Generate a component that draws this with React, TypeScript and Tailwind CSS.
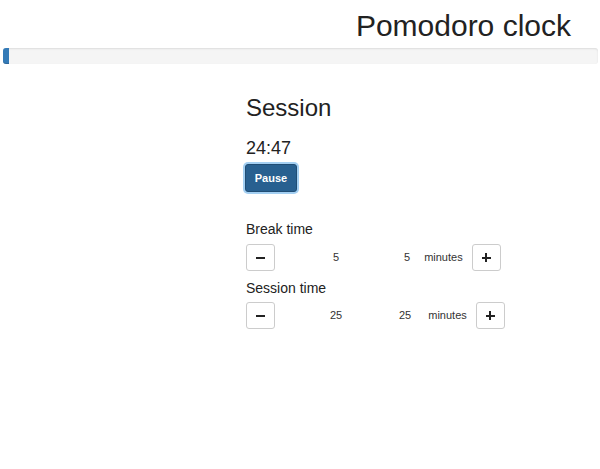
import { useState } from "react"

const font = { fontFamily: '"Liberation Sans", Arial, sans-serif' }

function StepButton({ sign }: { sign: "-" | "+" }) {
  return (
    <button className="w-[29px] h-[27px] flex items-center justify-center bg-white border border-[#ccc] rounded-[3px] shrink-0">
      {sign === "-" ? (
        <span className="block w-[9px] h-[2px] bg-[#222]" />
      ) : (
        <span className="relative block w-[9px] h-[9px]">
          <span className="absolute left-0 top-[3.5px] w-[9px] h-[2px] bg-[#222]" />
          <span className="absolute top-0 left-[3.5px] w-[2px] h-[9px] bg-[#222]" />
        </span>
      )}
    </button>
  )
}

function TimeRow({
  label,
  value,
  valueGap,
  unitGap,
  top,
}: {
  label: string
  value: number
  valueGap: string
  unitGap: string
  top: string
}) {
  return (
    <div className={top}>
      <div className="text-[14px] leading-[16px] text-[#222]">{label}</div>
      <div className={`flex items-center text-[11px] text-[#333] ${label === "Break time" ? "mt-[7px]" : "mt-[6px]"}`}>
        <StepButton sign="-" />
        <span className="w-[122px] text-center">{value}</span>
        <span className={valueGap}>{value}</span>
        <span className={unitGap}>minutes</span>
        <span className="ml-[9px]">
          <StepButton sign="+" />
        </span>
      </div>
    </div>
  )
}

export default function App() {
  const [running] = useState(true)

  return (
    <div className="w-[600px] h-[469px] bg-white text-[#333] overflow-hidden" style={font}>
      <h1 className="mt-[9px] pr-[29px] text-right text-[30px] leading-[34px] text-[#222]">Pomodoro clock</h1>

      <div className="mt-[5px] ml-[3px] mr-[2px] h-[16px] bg-[#f5f5f5] rounded-[3px] shadow-[inset_0_1px_2px_rgba(0,0,0,0.1)] flex">
        <div className="w-[6px] h-full bg-[#337ab7] rounded-l-[3px] shadow-[inset_0_-1px_0_rgba(0,0,0,0.15)]" />
      </div>

      <div className="ml-[246px]">
        <h2 className="mt-[30px] text-[24px] leading-[28px] text-[#222]">Session</h2>
        <div className="mt-[16px] text-[18px] leading-[20px] text-[#222]">24:47</div>
        <button className="mt-[6px] -ml-[1px] w-[52px] h-[28px] rounded-[3px] bg-[#286090] border border-[#204d74] text-white text-[11px] font-bold shadow-[0_0_0_2px_rgba(102,175,233,0.6)]">
          {running ? "Pause" : "Start"}
        </button>

        <TimeRow label="Break time" value={5} valueGap="ml-[7px]" unitGap="ml-[14px]" top="mt-[29px]" />
        <TimeRow label="Session time" value={25} valueGap="ml-[2px]" unitGap="ml-[17px]" top="mt-[9px]" />
      </div>
    </div>
  )
}
